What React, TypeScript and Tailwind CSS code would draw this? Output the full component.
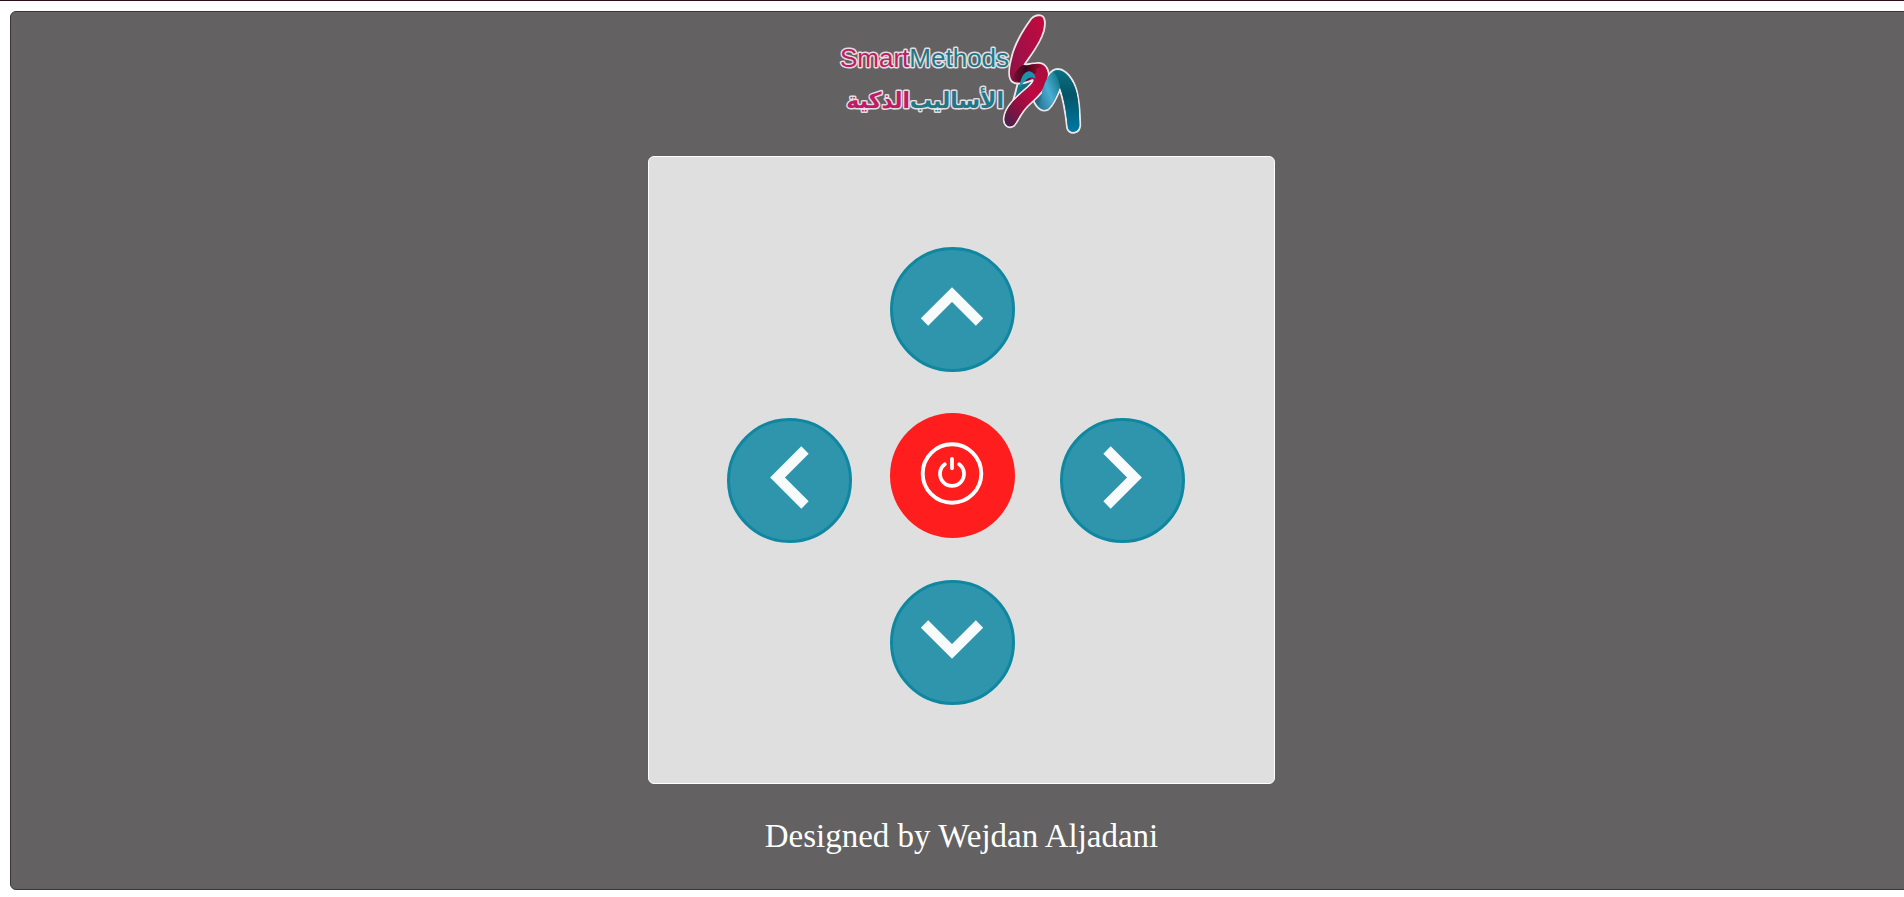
import type { ReactNode } from "react";

function Logo() {
  return (
    <svg
      className="block h-[144px] w-[263px]"
      viewBox="0 0 263 144"
      role="img"
      aria-label="Smart Methods"
    >
      <defs>
        <linearGradient id="redTop" x1="1" y1="0" x2="0" y2="1">
          <stop offset="0" stopColor="#c8083c" />
          <stop offset="0.5" stopColor="#a01048" />
          <stop offset="1" stopColor="#741238" />
        </linearGradient>
        <linearGradient id="redFold" x1="0" y1="0" x2="1" y2="0">
          <stop offset="0" stopColor="#7a1038" />
          <stop offset="0.4" stopColor="#3c0618" />
          <stop offset="1" stopColor="#b80c3c" />
        </linearGradient>
        <linearGradient id="redLow" x1="1" y1="0" x2="0" y2="1">
          <stop offset="0" stopColor="#a80c3c" />
          <stop offset="0.4" stopColor="#c00840" />
          <stop offset="0.7" stopColor="#8c1040" />
          <stop offset="1" stopColor="#3e2450" />
        </linearGradient>
        <linearGradient id="tealMid" x1="0" y1="0" x2="1" y2="0">
          <stop offset="0" stopColor="#0d8890" />
          <stop offset="0.4" stopColor="#1c5f78" />
          <stop offset="0.55" stopColor="#3b9cc4" />
          <stop offset="0.78" stopColor="#0b6c80" />
          <stop offset="1" stopColor="#0b6c80" />
        </linearGradient>
        <linearGradient id="tealRise" x1="0" y1="0.8" x2="1" y2="0.1">
          <stop offset="0" stopColor="#2b7c9c" />
          <stop offset="0.45" stopColor="#4aaed2" />
          <stop offset="1" stopColor="#0b7080" />
        </linearGradient>
        <linearGradient id="tealEnd" x1="0" y1="0" x2="0" y2="1">
          <stop offset="0" stopColor="#087080" />
          <stop offset="0.4" stopColor="#045468" />
          <stop offset="1" stopColor="#0078a4" />
        </linearGradient>
      </defs>
      <g
        fontFamily="'Liberation Sans', sans-serif"
        fontSize="26"
        stroke="#e4dde1"
        strokeWidth="3"
        strokeLinejoin="round"
        paintOrder="stroke"
      >
        <text x="10" y="55">
          <tspan fill="#c01c64">Smart</tspan>
          <tspan fill="#207886">Methods</tspan>
        </text>
      </g>
      <g
        fontFamily="'DejaVu Sans', sans-serif"
        fontSize="22"
        fontWeight="700"
        stroke="#e4dde1"
        strokeWidth="3"
        strokeLinejoin="round"
        paintOrder="stroke"
      >
        <text x="80" y="96" direction="rtl" fill="#c01c64">
          الذكية
        </text>
        <text x="174" y="96" direction="rtl" fill="#207886">
          الأساليب
        </text>
      </g>
      <g transform="scale(0.33333) translate(0 -36)">
        <g stroke="#ece6e9" strokeWidth="11" strokeLinejoin="round" paintOrder="stroke">
          <path
            fill="url(#tealMid)"
            d="M530 366C546 334 558 280 570 235C577 212 594 208 610 216C626 226 630 250 636 272C646 250 655 218 676 211C696 205 717 225 730 252C747 286 747 340 748 376C747 397 722 403 714 384C710 344 704 300 690 262C680 286 670 313 654 326C638 335 622 323 613 301C607 288 600 291 593 298C578 330 566 352 549 373Z"
          />
          <path
            fill="url(#redTop)"
            d="M631 49C644 51 644 72 639 92C628 130 600 164 580 194C588 200 600 193 618 192C640 188 654 204 653 226C650 266 620 290 594 314C570 337 562 363 550 376C538 384 523 376 524 355C528 317 566 289 596 262C610 250 616 236 606 238C588 246 563 254 547 242C534 228 541 196 548 170C557 132 584 88 606 58C614 50 622 47 631 49Z"
          />
        </g>
        <path
          fill="url(#redFold)"
          d="M548 238C553 216 566 202 580 194C588 200 600 193 618 192C634 190 645 200 646 214C636 206 620 212 606 232C592 246 563 252 548 238Z"
        />
        <path
          fill="url(#redLow)"
          d="M653 222C650 266 620 290 594 314C570 337 562 363 550 376C538 384 523 376 524 355C528 317 566 289 596 262C612 248 624 232 618 208C632 196 652 204 653 222Z"
        />
        <path
          fill="url(#tealEnd)"
          d="M670 215C690 203 717 225 730 252C747 286 747 340 748 376C747 397 722 403 714 384C710 344 704 300 690 262C686 244 680 230 670 215Z"
        />
        <path
          fill="url(#tealRise)"
          d="M636 272C644 252 652 224 670 215C684 228 688 246 690 262C680 286 670 313 654 326C644 331 634 328 626 320C634 306 638 290 636 272Z"
        />
        <path
          fill="#1c93aa"
          d="M568 262C572 236 580 215 597 214C610 216 618 226 616 236C600 226 588 240 568 262Z"
        />
      </g>
    </svg>
  );
}

const arrow =
  "flex size-[125px] cursor-pointer rounded-full border-3 border-[#0f87a0] bg-[#2f95ac]";

function Chevron({ d }: { d: string }) {
  return (
    <svg className="size-full" viewBox="0 0 119 119" aria-hidden="true">
      <path d={d} fill="none" stroke="#f8fbfb" strokeWidth="10.400" />
    </svg>
  );
}

function ArrowButton({
  label,
  place,
  children,
}: {
  label: string;
  place: string;
  children: ReactNode;
}) {
  return (
    <button type="button" aria-label={label} className={`${arrow} ${place}`}>
      {children}
    </button>
  );
}

export default function App() {
  return (
    <div className="overflow-x-hidden border-t border-[#2a0f1a] bg-white pb-[6px] pl-[10px]">
      <main className="mt-[10px] flex w-[calc(100%+9px)] flex-col items-center rounded-md border border-[#383638] bg-[#636162] pb-[33px]">
        <Logo />
        <section
          aria-label="Robot control"
          className="w-[627px] rounded-md border border-white bg-[#dfdfdf] pt-[90px] pb-[78px] pl-[78px]"
        >
          <div className="grid grid-cols-[163px_170px_125px] grid-rows-[166px_167px_125px]">
            <ArrowButton label="Forward" place="col-start-2 row-start-1">
              <Chevron d="M31.500 72L59 44.500L86.500 72" />
            </ArrowButton>
            <ArrowButton label="Left" place="col-start-1 row-start-2 mt-[5px]">
              <Chevron d="M75 29L47.500 56.500L75 84" />
            </ArrowButton>
            <button
              type="button"
              aria-label="Power"
              className="col-start-2 row-start-2 flex size-[125px] cursor-pointer rounded-full bg-[#ff1d1d]"
            >
              <svg className="size-full" viewBox="0 0 125 125" fill="none" stroke="#fff" aria-hidden="true">
                <circle cx="62" cy="60.500" r="29.300" strokeWidth="3.900" />
                <path
                  d="M54.800 51.300A12 12 0 1 0 69.200 51.300M62 45.800V55.300"
                  strokeWidth="3.800"
                  strokeLinecap="round"
                />
              </svg>
            </button>
            <ArrowButton label="Right" place="col-start-3 row-start-2 mt-[5px]">
              <Chevron d="M44 29L71.500 56.500L44 84" />
            </ArrowButton>
            <ArrowButton label="Backward" place="col-start-2 row-start-3">
              <Chevron d="M31.500 41L59 68.500L86.500 41" />
            </ArrowButton>
          </div>
        </section>
        <p className="mt-8 font-['Liberation_Serif',serif] text-[33px] leading-10 text-white">
          Designed by Wejdan Aljadani
        </p>
      </main>
    </div>
  );
}
